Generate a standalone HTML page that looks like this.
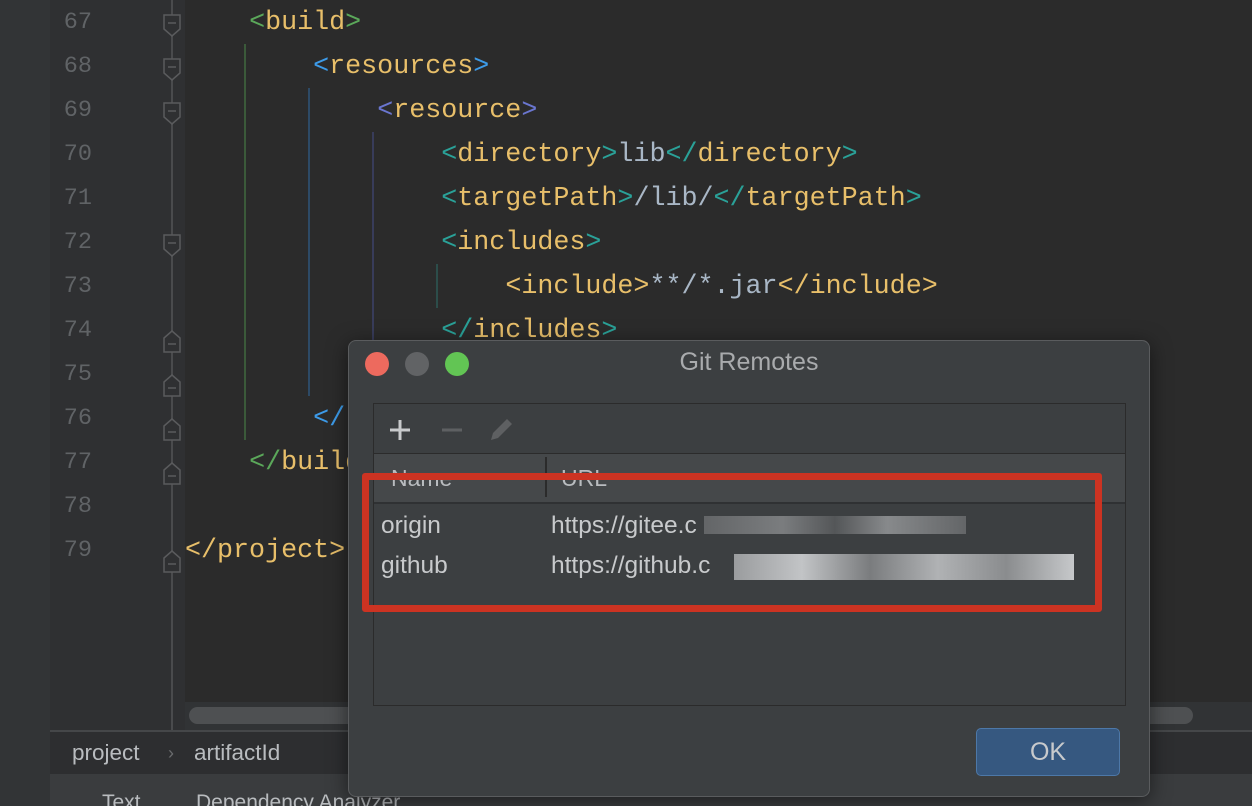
<!DOCTYPE html>
<html><head><meta charset="utf-8"><style>
*{margin:0;padding:0;box-sizing:border-box}
body{width:1252px;height:806px;overflow:hidden;background:#2b2b2b;position:relative;font-family:"Liberation Sans",sans-serif}
.abs{position:absolute}
.code{position:absolute;left:185px;top:1px;font-family:"Liberation Mono",monospace;font-size:26.7px;line-height:44px;color:#a9b7c6;white-space:pre}
.ln{position:absolute;left:50px;width:42px;text-align:right;font-family:"Liberation Mono",monospace;font-size:23.5px;line-height:44px;color:#606366;white-space:pre}
.y{color:#e8bf6a}.g{color:#5ba85a}.b{color:#3d9be9}.p{color:#6a76d0}.t{color:#2aa198}
</style></head><body>
<div class="abs" style="left:0;top:0;width:50px;height:806px;background:#323436"></div>
<div class="abs" style="left:50px;top:0;width:135px;height:730px;background:#2f3032"></div>
<div class="abs" style="left:171px;top:0;width:2px;height:730px;background:#4a4b4d"></div>
<div class="ln" style="top:1px">67
68
69
70
71
72
73
74
75
76
77
78
79</div>
<svg class="abs" style="left:160px;top:0" width="26" height="600">
<g fill="#2f3032" stroke="#5a5b5d" stroke-width="1.5">
<path d="M4 15h16v14l-8 7l-8-7z"/><path d="M4 59h16v14l-8 7l-8-7z"/><path d="M4 103h16v14l-8 7l-8-7z"/><path d="M4 235h16v14l-8 7l-8-7z"/>
<path d="M4 338l8-7l8 7v14h-16z"/><path d="M4 382l8-7l8 7v14h-16z"/><path d="M4 426l8-7l8 7v14h-16z"/><path d="M4 470l8-7l8 7v14h-16z"/><path d="M4 558l8-7l8 7v14h-16z"/>
</g>
<g stroke="#5a5b5d" stroke-width="1.5"><path d="M8 23h8M8 67h8M8 111h8M8 243h8M8 344h8M8 388h8M8 432h8M8 476h8M8 564h8"/></g>
</svg>
<div class="abs" style="left:244px;top:44px;width:2px;height:396px;background:#3b5a3a"></div>
<div class="abs" style="left:308px;top:88px;width:2px;height:308px;background:#2d4a66"></div>
<div class="abs" style="left:372px;top:132px;width:2px;height:220px;background:#383c5a"></div>
<div class="abs" style="left:436px;top:264px;width:2px;height:44px;background:#2c4d4a"></div>
<div class="code">    <span class="g">&lt;</span><span class="y">build</span><span class="g">&gt;</span>
        <span class="b">&lt;</span><span class="y">resources</span><span class="b">&gt;</span>
            <span class="p">&lt;</span><span class="y">resource</span><span class="p">&gt;</span>
                <span class="t">&lt;</span><span class="y">directory</span><span class="t">&gt;</span>lib<span class="t">&lt;/</span><span class="y">directory</span><span class="t">&gt;</span>
                <span class="t">&lt;</span><span class="y">targetPath</span><span class="t">&gt;</span>/lib/<span class="t">&lt;/</span><span class="y">targetPath</span><span class="t">&gt;</span>
                <span class="t">&lt;</span><span class="y">includes</span><span class="t">&gt;</span>
                    <span class="y">&lt;include&gt;</span>**/*.jar<span class="y">&lt;/include&gt;</span>
                <span class="t">&lt;/</span><span class="y">includes</span><span class="t">&gt;</span>
            <span class="p">&lt;/</span><span class="y">resource</span><span class="p">&gt;</span>
        <span class="b">&lt;/</span><span class="y">resources</span><span class="b">&gt;</span>
    <span class="g">&lt;/</span><span class="y">build</span><span class="g">&gt;</span>

<span class="y">&lt;/project&gt;</span></div>
<div class="abs" style="left:185px;top:702px;width:1067px;height:28px;background:#313335"></div>
<div class="abs" style="left:189px;top:707px;width:1004px;height:17px;border-radius:9px;background:#4e5052"></div>
<div class="abs" style="left:50px;top:730px;width:1202px;height:2px;background:#454749"></div>
<div class="abs" style="left:50px;top:732px;width:1202px;height:42px;background:#2d2e30;color:#b9bcbf;font-size:22.5px;line-height:42px"><span style="position:absolute;left:22px">project</span><span style="position:absolute;left:118px;color:#6a6c6e;font-size:18px">›</span><span style="position:absolute;left:144px">artifactId</span></div>
<div class="abs" style="left:50px;top:774px;width:1202px;height:32px;background:#3a3c3e;color:#b9bcbf;font-size:21px;line-height:58px;overflow:hidden"><span style="position:absolute;left:52px">Text</span><span style="position:absolute;left:146px">Dependency Analyzer</span></div>
<div class="abs" style="left:348px;top:340px;width:802px;height:457px;background:#3c3f41;border:1px solid #5a5c5e;border-radius:8px;box-shadow:0 4px 20px rgba(0,0,0,.5)">
 <div class="abs" style="left:16px;top:11px;width:24px;height:24px;border-radius:50%;background:#ed6a5e"></div>
 <div class="abs" style="left:56px;top:11px;width:24px;height:24px;border-radius:50%;background:#616365"></div>
 <div class="abs" style="left:96px;top:11px;width:24px;height:24px;border-radius:50%;background:#62c554"></div>
 <div class="abs" style="left:0;top:7px;width:800px;text-align:center;color:#a9abad;font-size:25px">Git Remotes</div>
 <div class="abs" style="left:24px;top:62px;width:753px;height:303px;border:1px solid #2b2b2b;background:#3c3f41">
  <svg class="abs" style="left:14px;top:12px" width="140" height="28">
   <path d="M12 4v20M2 14h20" stroke="#c8cacc" stroke-width="3"/>
   <path d="M54 14h20" stroke="#5e6062" stroke-width="3"/>
   <path d="M103 24l2-7l14-14l5 5l-14 14z" fill="#5e6062"/>
  </svg>
  <div class="abs" style="left:0;top:49px;width:751px;height:1px;background:#2b2b2b"></div>
  <div class="abs" style="left:0;top:50px;width:751px;height:48px;background:#45484a;color:#b9bcbf;font-size:23px;line-height:48px;overflow:hidden"><span style="position:absolute;left:17px;top:0px">Name</span><span style="position:absolute;left:171px;top:3px;width:2px;height:40px;background:#2b2b2b"></span><span style="position:absolute;left:187px;top:0px">URL</span></div>
  <div class="abs" style="left:0;top:98px;width:751px;height:2px;background:#2f3133"></div>
  <div class="abs" style="left:7px;top:102px;color:#c8cacc;font-size:24.5px;line-height:40px">origin<br>github</div>
  <div class="abs" style="left:177px;top:102px;color:#c8cacc;font-size:24.5px;line-height:40px">https://gitee.c<br>https://github.c</div>
  <div class="abs" style="left:330px;top:112px;width:262px;height:18px;background:linear-gradient(90deg,#6d6f71,#8a8c8e 30%,#5a5c5e 50%,#9a9c9e 70%,#6d6f71);opacity:.8"></div>
  <div class="abs" style="left:360px;top:150px;width:340px;height:26px;background:linear-gradient(90deg,#9a9c9e,#c2c4c6 20%,#7a7c7e 40%,#b0b2b4 60%,#8a8c8e 80%,#c6c8ca)"></div>
 </div>
 <div class="abs" style="left:627px;top:387px;width:144px;height:48px;border:1px solid #4d78a8;border-radius:5px;background:#365880;color:#c8cacc;font-size:25px;text-align:center;line-height:46px">OK</div>
</div>
<div class="abs" style="left:362px;top:473px;width:740px;height:139px;border:7px solid #cc3322;border-radius:3px"></div>
</body></html>
